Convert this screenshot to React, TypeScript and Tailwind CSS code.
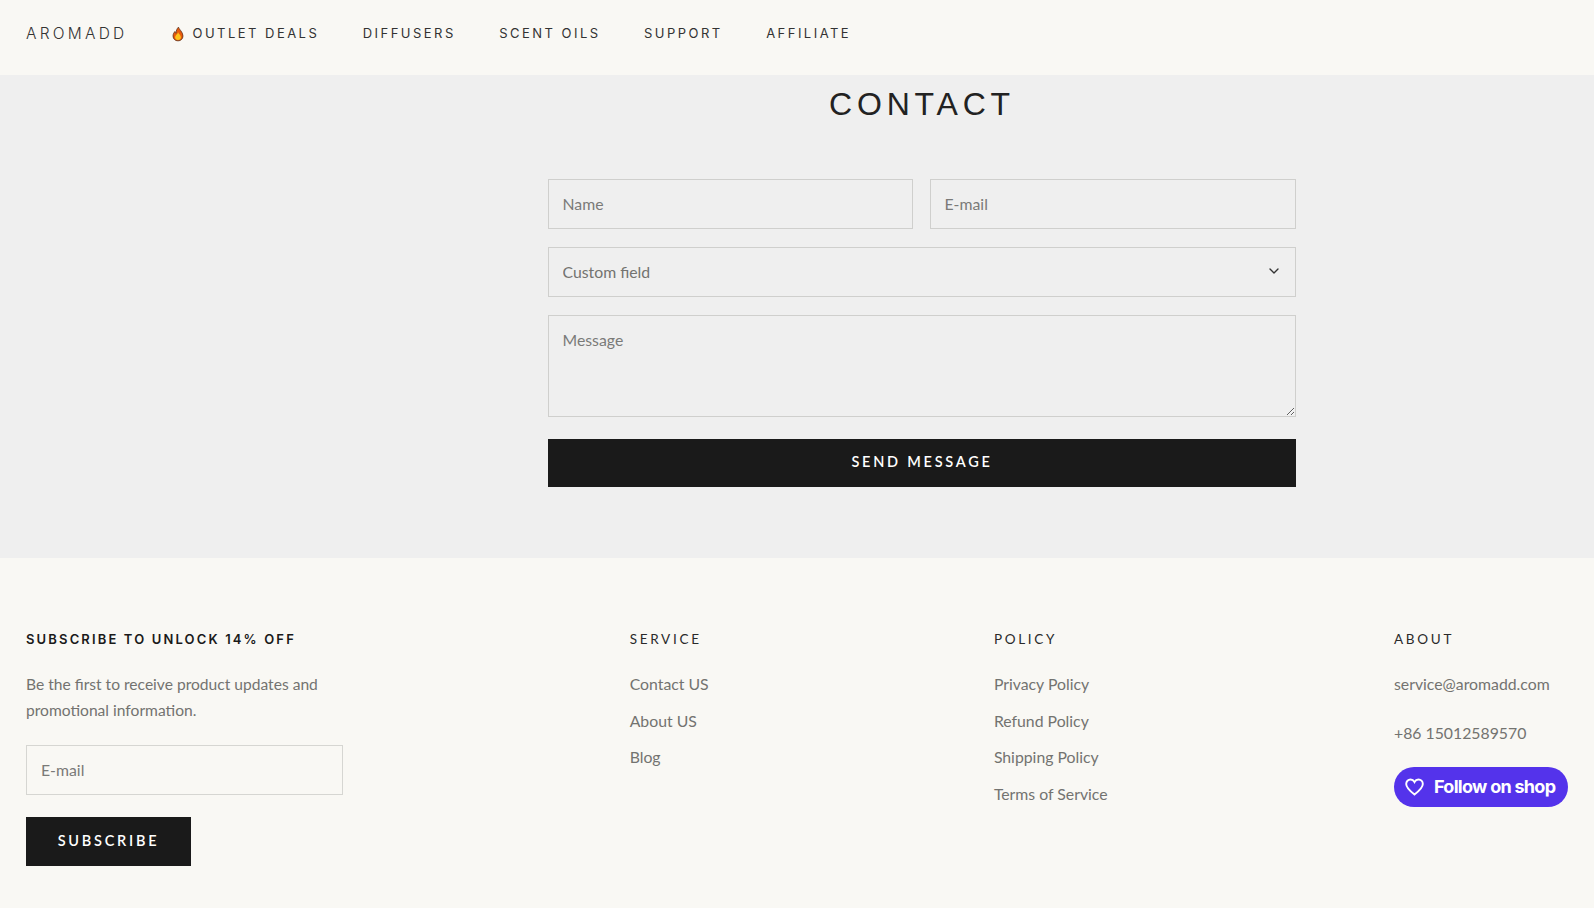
import { ChevronDown } from "lucide-react";

const navItems = ["DIFFUSERS", "SCENT OILS", "SUPPORT", "AFFILIATE"];

const serviceLinks = ["Contact US", "About US", "Blog"];
const policyLinks = ["Privacy Policy", "Refund Policy", "Shipping Policy", "Terms of Service"];

const headFont = "font-['Inter','Liberation_Sans',sans-serif]";
const bodyFont = "font-['Lato','Open_Sans',sans-serif]";

const fieldClass =
  "h-[50px] border border-[#cfcfcd] bg-transparent px-[13.5px] text-[15.8px] text-[#737370] placeholder:text-[#7a7a78] outline-none";

const Flame = () => (
  <svg width="12" height="16" viewBox="0 0 14 17">
    <path d="M7.5 0.5C8 3 12.8 6 12.8 10.8C12.8 14.2 10.3 16.5 7 16.5C3.7 16.5 1.2 14.2 1.2 10.8C1.2 8.2 2.6 6.6 3.4 5.6C3.6 6.8 4.2 7.4 4.8 7.6C4.6 5 5.8 2.2 7.5 0.5Z" fill="#e8590c" stroke="#5a2a10" strokeWidth="0.9" />
    <path d="M7.2 6.5C7.6 8.4 10.4 9.8 10.4 12.3C10.4 14.2 8.9 15.6 7 15.6C5.1 15.6 3.6 14.2 3.6 12.3C3.6 10.2 6.4 9 7.2 6.5Z" fill="#fcc21b" />
  </svg>
);

const ContactForm = () => (
  <form className="mt-[53px] flex flex-col">
    <div className="flex gap-[17px]">
      <input className={`${fieldClass} w-[365px] shrink-0 pb-[1px]`} placeholder="Name" />
      <input className={`${fieldClass} min-w-0 flex-1 pb-[1px]`} placeholder="E-mail" />
    </div>
    <div className="relative mt-[18px]">
      <select className={`${fieldClass} w-full appearance-none`} defaultValue="">
        <option value="">Custom field</option>
      </select>
      <ChevronDown className="absolute right-[14px] top-[16px] h-4 w-4 text-[#333]" strokeWidth={2} />
    </div>
    <textarea
      className="mt-[18px] block h-[102px] w-full border border-[#cfcfcd] bg-transparent px-[13.5px] py-[12px] text-[15.8px] text-[#737370] placeholder:text-[#7a7a78] outline-none"
      placeholder="Message"
    />
    <button
      type="button"
      className={`mt-[22px] h-[48px] w-full bg-[#1a1a1a] pb-[3px] text-[14.5px] font-semibold tracking-[0.19em] text-white ${bodyFont}`}
    >
      SEND MESSAGE
    </button>
  </form>
);

const FooterColumn = ({ title, links, width }: { title: string; links: string[]; width: string }) => (
  <div className={width}>
    <h3 className="text-[13.5px] leading-5 tracking-[0.2em] text-[#2a2a2a]">{title}</h3>
    <ul className="mt-[22px] flex flex-col gap-[10.5px]">
      {links.map((link) => (
        <li key={link} className="text-[15.8px] leading-[26px] text-[#737370]">
          {link}
        </li>
      ))}
    </ul>
  </div>
);

const App = () => {
  return (
    <div className={`h-[908px] overflow-hidden bg-[#f9f8f4] ${bodyFont}`}>
      <header className={`flex h-[75px] items-center px-[26px] pb-[8px] text-[#333] ${headFont}`}>
        <span className="mr-[44px] text-[15.5px] font-light tracking-[0.21em]">AROMADD</span>
        <nav className="flex items-center gap-[43.5px] text-[13px] tracking-[0.19em]">
          <span className="flex items-center gap-[9px]">
            <Flame />
            OUTLET DEALS
          </span>
          {navItems.map((item) => (
            <span key={item}>{item}</span>
          ))}
        </nav>
      </header>

      <main className="h-[483px] bg-[#efefef] pt-[7px]">
        <div className="ml-[548px] w-[748px]">
          <h1 className="text-center font-['Liberation_Sans',sans-serif] text-[32px] leading-11 tracking-[0.15em] text-[#222]">
            CONTACT
          </h1>
          <ContactForm />
        </div>
      </main>

      <footer className="flex px-[26px] pt-[71px]">
        <div className="w-[605px]">
          <h3 className={`text-[13px] leading-5 font-semibold tracking-[0.165em] text-[#1a1a1a] ${headFont}`}>
            SUBSCRIBE TO UNLOCK 14% OFF
          </h3>
          <p className="mt-[22px] w-[317px] text-[15.6px] leading-[26px] text-[#737370]">
            Be the first to receive product updates and promotional information.
          </p>
          <input
            className="mt-[22px] block h-[50px] w-[317px] border border-[#d6d6d2] bg-transparent px-[14px] pb-[1px] text-[15.8px] placeholder:text-[#7a7a78] outline-none"
            placeholder="E-mail"
          />
          <button
            type="button"
            className="mt-[22px] h-[49px] w-[165px] bg-[#1a1a1a] pb-[1px] text-[14.5px] font-semibold tracking-[0.19em] text-white"
          >
            SUBSCRIBE
          </button>
        </div>
        <FooterColumn title="SERVICE" links={serviceLinks} width="w-[365px]" />
        <FooterColumn title="POLICY" links={policyLinks} width="w-[401px]" />
        <div>
          <h3 className="text-[13.5px] leading-5 tracking-[0.2em] text-[#2a2a2a]">ABOUT</h3>
          <p className="mt-[22px] text-[15.8px] leading-[26px] text-[#737370]">service@aromadd.com</p>
          <p className="mt-[23px] text-[15.8px] leading-[26px] text-[#737370]">+86 15012589570</p>
          <a className="mt-[21px] flex h-10 w-[174px] items-center gap-[10px] rounded-full bg-[#5433eb] pb-[1px] pl-[11px] font-['Inter',sans-serif] text-[18px] font-bold tracking-[-0.04em] text-white">
            <svg width="19" height="18" viewBox="0 0 24 22" fill="none" stroke="white" strokeWidth="2.4">
              <path d="M12 20.5C6 15.8 1.5 12 1.5 7.2C1.5 3.9 4 1.5 7 1.5C9 1.5 10.9 2.6 12 4.6C13.1 2.6 15 1.5 17 1.5C20 1.5 22.5 3.9 22.5 7.2C22.5 12 18 15.8 12 20.5Z" />
            </svg>
            Follow on shop
          </a>
        </div>
      </footer>
    </div>
  );
};

export default App;
